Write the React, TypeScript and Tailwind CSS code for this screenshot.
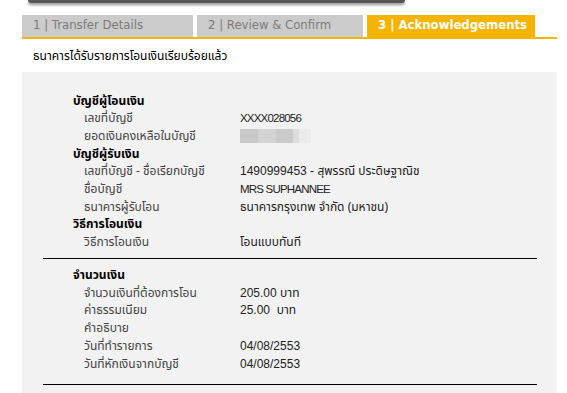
import React from 'react';

type Row = { label: string; value?: React.ReactNode; heading?: boolean };

const thai = "font-['Tahoma','Noto_Sans_Thai','Noto_Sans','DejaVu_Sans',sans-serif]";
const latin = "font-['Liberation_Sans','Noto_Sans_Thai',sans-serif]";

function Blurred() {
  return (
    <div className="flex h-[14px] w-[71px]">
      <div className="w-[18px] bg-[#c9c9c9]" />
      <div className="w-[18px] bg-[#d3d3d3]" />
      <div className="w-[17px] bg-[#cbcbcb]" />
      <div className="w-[6px] bg-[#dddddd]" />
      <div className="w-[12px] bg-[#ebebeb]" />
    </div>
  );
}

const top: Row[] = [
  { label: 'บัญชีผู้โอนเงิน', heading: true },
  { label: 'เลขที่บัญชี', value: <span className={`${latin} text-[11.5px] tracking-[-0.8px]`}>XXXX028056</span> },
  { label: 'ยอดเงินคงเหลือในบัญชี', value: <Blurred /> },
  { label: 'บัญชีผู้รับเงิน', heading: true },
  { label: 'เลขที่บัญชี - ชื่อเรียกบัญชี', value: <span><span className={latin}>1490999453 - </span><span className={thai}>สุพรรณี ประดิษฐาณิช</span></span> },
  { label: 'ชื่อบัญชี', value: <span className={`${latin} text-[11.5px] tracking-[-0.8px]`}>MRS SUPHANNEE</span> },
  { label: 'ธนาคารผู้รับโอน', value: <span className={thai}>ธนาคารกรุงเทพ จำกัด (มหาชน)</span> },
  { label: 'วิธีการโอนเงิน', heading: true },
  { label: 'วิธีการโอนเงิน', value: <span className={thai}>โอนแบบทันที</span> },
];

const amount: Row[] = [
  { label: 'จำนวนเงิน', heading: true },
  { label: 'จำนวนเงินที่ต้องการโอน', value: <span><span className={latin}>205.00 </span><span className={thai}>บาท</span></span> },
  { label: 'ค่าธรรมเนียม', value: <span><span className={latin}>25.00&nbsp; </span><span className={thai}>บาท</span></span> },
  { label: 'คำอธิบาย' },
  { label: 'วันที่ทำรายการ', value: <span className={latin}>04/08/2553</span> },
  { label: 'วันที่หักเงินจากบัญชี', value: <span className={latin}>04/08/2553</span> },
];

function Rows({ rows, h }: { rows: Row[]; h: string }) {
  return (
    <div className="flex flex-col">
      {rows.map((r, i) =>
        r.heading ? (
          <div key={i} className={`${h} flex items-center pl-[30px] text-[12px] font-bold text-black ${thai}`}>
            {r.label}
          </div>
        ) : (
          <div key={i} className={`${h} flex items-center pl-[41px] text-[12px]`}>
            <div className={`w-[156px] shrink-0 text-[#444] ${thai}`}>{r.label}</div>
            <div className="text-[#222]">{r.value}</div>
          </div>
        )
      )}
    </div>
  );
}

export default function App() {
  return (
    <div className="h-[393px] w-[567px] overflow-hidden bg-white">
      {/* top frame edge */}
      <div className="ml-[28px] h-[3px] w-[377px] rounded-b-md bg-[#555] shadow-[0_2px_3px_rgba(0,0,0,0.45)]" />

      {/* Steps */}
      <div className="ml-[22px] mt-[12px] w-[535px] border-b-2 border-[#f5b400]">
        <div className="flex h-[22px] gap-[4px] font-['DejaVu_Sans',sans-serif] text-[11.7px]">
          <div className="flex w-[171px] items-center bg-[#cbcbcb] pl-[11px] text-[#7b7b7b]">1 | Transfer Details</div>
          <div className="flex w-[166px] items-center bg-[#cbcbcb] pl-[11px] text-[#7b7b7b]">2 | Review &amp; Confirm</div>
          <div className="flex w-[168px] items-center bg-[#f5b400] pl-[11px] font-bold text-white">3 | Acknowledgements</div>
        </div>
      </div>

      <div className={`ml-[33px] mt-[9px] h-[16px] text-[12px] leading-[16px] text-black ${thai}`}>ธนาคารได้รับรายการโอนเงินเรียบร้อยแล้ว</div>

      {/* Panel */}
      <div className="ml-[22px] mt-[8px] h-[400px] w-[535px] bg-[#f2f2f2] pl-[21px] pr-[20px] pt-[20px]">
        <Rows rows={top} h="h-[17.67px]" />
        <div className="mt-[7px] h-px bg-black" />
        <div className="mt-[7px]">
          <Rows rows={amount} h="h-[17.8px]" />
        </div>
        <div className="mt-[11px] h-px bg-black" />
      </div>
    </div>
  );
}
